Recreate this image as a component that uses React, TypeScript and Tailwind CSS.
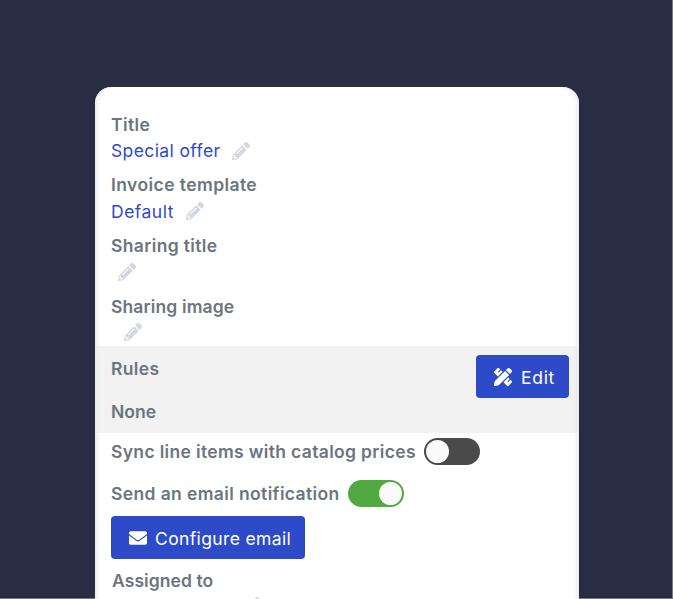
import type { ReactNode } from 'react';
import { FaEnvelope, FaPencilAlt, FaPencilRuler } from 'react-icons/fa';

function Label({ children, className = '' }: { children: ReactNode; className?: string }) {
  return (
    <div className={`whitespace-nowrap text-[17.5px] font-semibold text-[#6c757d] ${className}`}>
      {children}
    </div>
  );
}

function Pencil({ className = '' }: { className?: string }) {
  return <FaPencilAlt className={`size-[18px] shrink-0 text-[#d3d7df] ${className}`} />;
}

function Field({ label, value, children, labelClass = '', valueClass = '' }: {
  label: string;
  value?: string;
  children: ReactNode;
  labelClass?: string;
  valueClass?: string;
}) {
  return (
    <div>
      <Label className={`h-[26px] leading-[26px] ${labelClass}`}>{label}</Label>
      <div className="flex h-[27px] items-center">
        {value && (
          <span className={`shrink-0 whitespace-nowrap pt-0.5 text-[17.5px] text-[#2d4bc9] ${valueClass}`}>{value}</span>
        )}
        {children}
      </div>
    </div>
  );
}

function Toggle({ on = false }: { on?: boolean }) {
  return (
    <button
      role="switch"
      aria-checked={on}
      className={`flex h-[27px] w-14 items-center rounded-full px-0.5 ${on ? 'justify-end bg-[#50aa3f]' : 'bg-[#4a4a4a]'}`}
    >
      <span className="size-[23px] rounded-full bg-[#fafafa]" />
    </button>
  );
}

export default function App() {
  return (
    <div className="h-[599px] overflow-hidden bg-[#292d43] pt-[87px] pl-[95px] font-['Inter',sans-serif] shadow-[inset_-1px_-1px_#777a89]">
      <div className="flex h-[520px] w-[484px] flex-col rounded-t-2xl bg-white pt-6 shadow-[inset_5px_0_5px_-3px_#e6e8e8,inset_-5px_0_5px_-3px_#e6e8e8]">
        <div className="flex flex-col gap-[7.67px] px-4">
          <Field label="Title" value="Special offer" labelClass="pt-px tracking-[0.4px]" valueClass="w-[121px] tracking-[0.39px]">
            <Pencil />
          </Field>
          <Field label="Invoice template" value="Default" labelClass="tracking-[0.42px]" valueClass="w-[75px] tracking-[0.5px]">
            <Pencil />
          </Field>
          <Field label="Sharing title" labelClass="pt-px tracking-[0.36px]">
            <Pencil className="ml-[6.5px]" />
          </Field>
          <Field label="Sharing image" labelClass="pt-px tracking-[0.13px]">
            <Pencil className="ml-[12.5px]" />
          </Field>
        </div>

        {/* Rules */}
        <div className="flex h-[87px] shrink-0 justify-between bg-[#e9e9e9]/60 pt-[9px] pr-2.5 pl-4">
          <div className="flex flex-col gap-[17px]">
            <Label className="h-[26px] pt-px leading-[26px] tracking-[0.35px]">Rules</Label>
            <Label className="h-[26px] pt-px leading-[26px]">None</Label>
          </div>
          <button className="flex h-[43.5px] w-[93px] items-center rounded bg-[#2d4bc9] pl-[18px] text-[17.5px] text-white">
            <FaPencilRuler className="size-[18px]" />
            <span className="ml-[9px] pt-0.5 tracking-[0.7px]">Edit</span>
          </button>
        </div>

        {/* Options */}
        <div className="flex flex-col items-start px-4 pt-[5px]">
          <div className="flex h-[27px] items-center">
            <Label className="w-[313px] pt-px tracking-[0.34px]">Sync line items with catalog prices</Label>
            <Toggle />
          </div>
          <div className="mt-[15px] flex h-[27px] items-center">
            <Label className="w-[237px] pt-0.5 tracking-[0.38px]">Send an email notification</Label>
            <Toggle on />
          </div>
          <button className="mt-[9px] flex h-[43.5px] w-[194px] items-center rounded bg-[#2d4bc9] pl-[18px] text-[17.5px] text-white">
            <FaEnvelope className="size-[18px]" />
            <span className="ml-2 whitespace-nowrap pt-0.5 tracking-[0.37px]">Configure email</span>
          </button>
          <Label className="mt-2 ml-px h-[26px] pt-px leading-[26px] tracking-[0.08px]">Assigned to</Label>
          <Pencil className="mt-[3.5px] ml-[132px]" />
        </div>
      </div>
    </div>
  );
}
